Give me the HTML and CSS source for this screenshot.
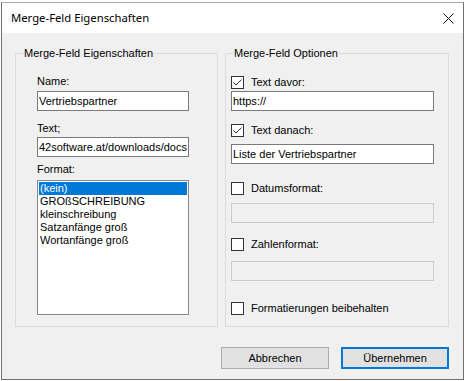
FILE: index.html
```html
<!DOCTYPE html>
<html lang="de">
<head>
  <meta charset="UTF-8" />
  <title>Merge-Feld Eigenschaften</title>
  <link rel="stylesheet" href="styles.css">
</head>
<body>

  <div class="window">
    <div class="titlebar">
      <span class="title">Merge-Feld Eigenschaften</span>
      <svg class="close" width="11" height="11" viewBox="0 0 11 11">
        <path d="M0.5 0.5 L10.5 10.5 M10.5 0.5 L0.5 10.5" stroke="#111" stroke-width="1" fill="none"/>
      </svg>
    </div>

    <div class="client">
      <div class="groups">
        <fieldset class="group group-left">
          <legend>Merge-Feld Eigenschaften</legend>
          <div class="body-left">
            <div class="label first">Name:</div>
            <div class="textbox tb-name">Vertriebspartner</div>
            <div class="label lbl-text">Text;</div>
            <div class="textbox tb-text">42software.at/downloads/docs</div>
            <div class="label lbl-format">Format:</div>
            <div class="listbox">
              <div class="item selected">(kein)</div>
              <div class="item">GROßSCHREIBUNG</div>
              <div class="item">kleinschreibung</div>
              <div class="item">Satzanfänge groß</div>
              <div class="item">Wortanfänge groß</div>
            </div>
          </div>
        </fieldset>

        <fieldset class="group group-right">
          <legend>Merge-Feld Optionen</legend>
          <div class="body-right">
            <div class="check-row r1">
              <span class="checkbox">
                <svg width="11" height="11" viewBox="0 0 11 11"><path d="M1.5 5.5 L4 8 L9.5 2.5" stroke="#333" stroke-width="1" fill="none"/></svg>
              </span>
              <span>Text davor:</span>
            </div>
            <div class="textbox wide t1">https://</div>

            <div class="check-row r2">
              <span class="checkbox">
                <svg width="11" height="11" viewBox="0 0 11 11"><path d="M1.5 5.5 L4 8 L9.5 2.5" stroke="#333" stroke-width="1" fill="none"/></svg>
              </span>
              <span>Text danach:</span>
            </div>
            <div class="textbox wide t2">Liste der Vertriebspartner</div>

            <div class="check-row r3">
              <span class="checkbox"></span>
              <span>Datumsformat:</span>
            </div>
            <div class="textbox wide disabled t3"></div>

            <div class="check-row r4">
              <span class="checkbox"></span>
              <span>Zahlenformat:</span>
            </div>
            <div class="textbox wide disabled t4"></div>

            <div class="check-row r5">
              <span class="checkbox"></span>
              <span>Formatierungen beibehalten</span>
            </div>
          </div>
        </fieldset>
      </div>

      <div class="buttons">
        <button class="btn">Abbrechen</button>
        <button class="btn default">Übernehmen</button>
      </div>
    </div>
  </div>

</body>
</html>
```

FILE: styles.css
```css
body {
  margin: 0;
  background: #fff;
  font-family: "Liberation Sans", Arial, sans-serif;
  font-size: 11px;
  color: #000;
}
.window {
  margin: 2px 0 0 1px;
  width: 461px;
  height: 376px;
  border: 1px solid #707070;
  border-top-color: #a8a8a8;
  background: #f0f0f0;
  display: flex;
  flex-direction: column;
}
.titlebar {
  height: 30px;
  background: #fff;
  display: flex;
  align-items: center;
  justify-content: space-between;
  padding: 0 9px;
}
.title {
  font-family: "Noto Sans", "Open Sans", sans-serif;
  font-size: 11.3px;
  line-height: 16px;
  color: #000;
}
.close {
  display: block;
}
.client {
  padding: 14px 0 0 13px;
}
.groups {
  display: flex;
  gap: 7px;
  width: 434px;
}
.group {
  margin: 0;
  padding: 0;
  min-width: 0;
  border: 1px solid #dcdcdc;
  box-sizing: border-box;
}
.group-left {
  width: 203px;
}
.group-right {
  width: 224px;
}
legend {
  margin-left: 7px;
  padding: 0 1px;
  line-height: 13px;
}
.body-left {
  padding: 0 0 11px 21px;
}
.body-right {
  padding: 0 0 10px 5px;
}
.label {
  line-height: 13px;
}
.label.first {
  margin-top: 15px;
}
.tb-name {
  margin-top: 3px;
}
.lbl-text {
  margin-top: 11px;
}
.tb-text {
  margin-top: 2px;
}
.lbl-format {
  margin-top: 6px;
}
.textbox {
  width: 152px;
  height: 20px;
  box-sizing: border-box;
  border: 1px solid #7a7a7a;
  background: #fff;
  padding: 0 1px;
  line-height: 18px;
  white-space: nowrap;
  overflow: hidden;
}
.textbox.wide {
  width: 203px;
}
.textbox.disabled {
  border-color: #cccccc;
  background: #f0f0f0;
}
.listbox {
  margin-top: 4px;
  width: 152px;
  height: 135px;
  box-sizing: border-box;
  border: 1px solid #828790;
  background: #fff;
  padding: 1px;
}
.item {
  line-height: 13px;
  padding-left: 1px;
  white-space: nowrap;
}
.item.selected {
  background: #0078d7;
  color: #fff;
}
.check-row {
  display: flex;
  align-items: center;
  gap: 7px;
  height: 15px;
  line-height: 13px;
}
.checkbox {
  width: 13px;
  height: 13px;
  box-sizing: border-box;
  border: 1px solid #333;
  background: #fff;
  display: flex;
}
.checkbox svg {
  display: block;
}
.r1 { margin-top: 15px; }
.t1 { margin-top: 1px; }
.r2 { margin-top: 12px; }
.t2 { margin-top: 6px; }
.r3 { margin-top: 17px; }
.t3 { margin-top: 7px; }
.r4 { margin-top: 14px; }
.t4 { margin-top: 9px; }
.r5 { margin-top: 20px; }
.buttons {
  width: 434px;
  margin-top: 20px;
  display: flex;
  justify-content: flex-end;
  gap: 12px;
}
.btn {
  width: 108px;
  height: 22px;
  box-sizing: border-box;
  border: 1px solid #adadad;
  background: #e1e1e1;
  font-family: "Liberation Sans", Arial, sans-serif;
  font-size: 11px;
  color: #000;
  padding: 0;
  margin: 0;
}
.btn.default {
  border: 2px solid #0078d7;
}
```
